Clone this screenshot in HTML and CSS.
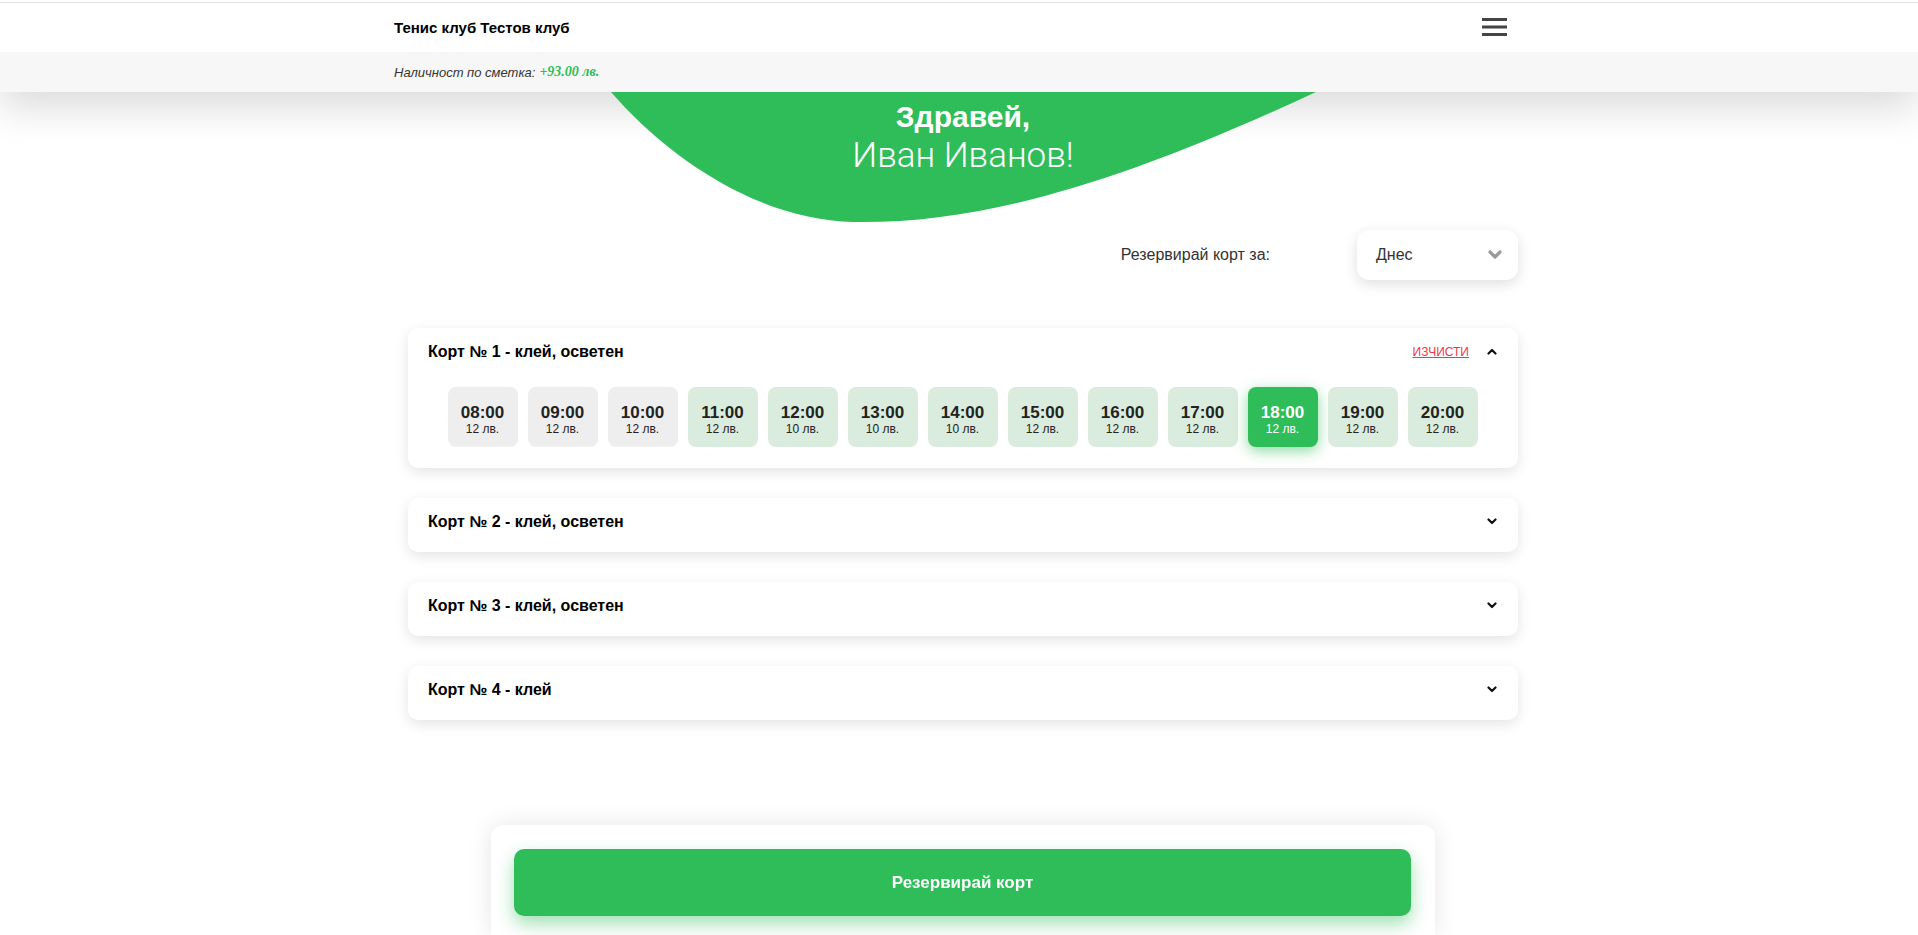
FILE: index.html
```html
<!DOCTYPE html>
<html lang="bg">
<head>
<meta charset="utf-8">
<title>Тенис клуб Тестов клуб</title>
<link rel="stylesheet" href="styles.css">
</head>
<body>
<header class="site-header">
  <div class="topbar">
    <div class="header-inner">
      <span class="club">Тенис клуб Тестов клуб</span>
      <button class="menu" aria-label="Меню">
        <svg width="25" height="19" viewBox="0 0 25 19"><rect x="0" y="0" width="25" height="3" fill="#444"/><rect x="0" y="7.5" width="25" height="3" fill="#444"/><rect x="0" y="15" width="25" height="3" fill="#444"/></svg>
      </button>
    </div>
  </div>
  <div class="balance-bar">
    <div class="header-inner">
      <span class="balance-label">Наличност по сметка:</span>
      <span class="balance-value">+93.00 лв.</span>
    </div>
  </div>
</header>

<main class="main">
  <section class="hero">
    <svg class="blob" width="720" height="135" viewBox="0 0 720 135"><path d="M8 0 C 60 60, 150 128, 251 130 C 380 132, 520 90, 713 0 Z" fill="#2ebd59"/></svg>
    <div class="greet-1">Здравей,</div>
    <div class="greet-2">Иван Иванов!</div>
  </section>

  <div class="container">
    <div class="date-row">
      <span class="date-label">Резервирай корт за:</span>
      <div class="select">
        <span>Днес</span>
        <svg width="14" height="10" viewBox="0 0 14 10"><polyline points="2,2 7,7 12,2" fill="none" stroke="#9a9a9a" stroke-width="3.2" stroke-linecap="round" stroke-linejoin="round"/></svg>
      </div>
    </div>

    <div class="courts">
      <div class="court">
        <div class="court-head">
          <span class="court-title">Корт № 1 - клей, осветен</span>
          <a class="clear" href="#">ИЗЧИСТИ</a>
          <svg class="chev" width="10" height="7" viewBox="0 0 10 7"><polyline points="1.5,5.5 5,2 8.5,5.5" fill="none" stroke="#111" stroke-width="2.2" stroke-linecap="round" stroke-linejoin="round"/></svg>
        </div>
        <div class="slots">
          <div class="slot past"><b>08:00</b><span>12 лв.</span></div>
          <div class="slot past"><b>09:00</b><span>12 лв.</span></div>
          <div class="slot past"><b>10:00</b><span>12 лв.</span></div>
          <div class="slot free"><b>11:00</b><span>12 лв.</span></div>
          <div class="slot free"><b>12:00</b><span>10 лв.</span></div>
          <div class="slot free"><b>13:00</b><span>10 лв.</span></div>
          <div class="slot free"><b>14:00</b><span>10 лв.</span></div>
          <div class="slot free"><b>15:00</b><span>12 лв.</span></div>
          <div class="slot free"><b>16:00</b><span>12 лв.</span></div>
          <div class="slot free"><b>17:00</b><span>12 лв.</span></div>
          <div class="slot selected"><b>18:00</b><span>12 лв.</span></div>
          <div class="slot free"><b>19:00</b><span>12 лв.</span></div>
          <div class="slot free"><b>20:00</b><span>12 лв.</span></div>
        </div>
      </div>

      <div class="court">
        <div class="court-head">
          <span class="court-title">Корт № 2 - клей, осветен</span>
          <svg class="chev" width="10" height="7" viewBox="0 0 10 7"><polyline points="1.5,1.5 5,5 8.5,1.5" fill="none" stroke="#111" stroke-width="2.2" stroke-linecap="round" stroke-linejoin="round"/></svg>
        </div>
      </div>

      <div class="court">
        <div class="court-head">
          <span class="court-title">Корт № 3 - клей, осветен</span>
          <svg class="chev" width="10" height="7" viewBox="0 0 10 7"><polyline points="1.5,1.5 5,5 8.5,1.5" fill="none" stroke="#111" stroke-width="2.2" stroke-linecap="round" stroke-linejoin="round"/></svg>
        </div>
      </div>

      <div class="court">
        <div class="court-head">
          <span class="court-title">Корт № 4 - клей</span>
          <svg class="chev" width="10" height="7" viewBox="0 0 10 7"><polyline points="1.5,1.5 5,5 8.5,1.5" fill="none" stroke="#111" stroke-width="2.2" stroke-linecap="round" stroke-linejoin="round"/></svg>
        </div>
      </div>
    </div>
  </div>
</main>

<div class="footer-bar">
  <div class="panel">
    <button class="reserve">Резервирай корт</button>
  </div>
</div>
</body>
</html>
```

FILE: styles.css
```css
* { box-sizing: border-box; }

html, body {
  margin: 0;
  padding: 0;
  background: #fff;
}

body {
  font-family: "Liberation Sans", Arial, sans-serif;
  color: #222;
}

/* Header */
.site-header {
  background: #fff;
  padding-top: 2px;
  box-shadow: 0 15px 40px rgba(0, 0, 0, 0.15);
}

.topbar {
  border-top: 1px solid #e2e2e2;
  height: 50px;
  padding-left: 8px;
  display: flex;
  align-items: center;
}

.header-inner {
  width: 1138px;
  margin: 0 auto;
  display: flex;
  align-items: center;
}

.club {
  flex: 1;
  font-size: 15px;
  font-weight: bold;
  color: #000;
}

.menu {
  border: 0;
  background: none;
  padding: 0;
  margin-right: 25px;
  width: 25px;
  height: 19px;
  display: block;
}

.menu svg { display: block; }

.balance-bar {
  background: #f7f7f7;
  height: 40px;
  padding-left: 8px;
  display: flex;
  align-items: center;
}

.balance-label {
  font-size: 13px;
  font-style: italic;
  color: #333;
}

.balance-value {
  margin-left: 4px;
  font-family: "Liberation Serif", "Times New Roman", serif;
  font-size: 14px;
  font-style: italic;
  font-weight: bold;
  color: #2ebd59;
}

/* Main */
.main {
  padding-left: 8px;
  padding-bottom: 40px;
}

.hero {
  position: relative;
  height: 138px;
  padding-top: 8px;
  text-align: center;
  color: #fff;
}

.blob {
  position: absolute;
  top: 0;
  left: 50%;
  margin-left: -360px;
  display: block;
}

.greet-1,
.greet-2 {
  position: relative;
}

.greet-1 {
  font-family: "Liberation Sans", Arial, sans-serif;
  font-size: 30px;
  font-weight: 700;
  line-height: 34px;
}

.greet-2 {
  font-family: Roboto, "Open Sans", sans-serif;
  font-size: 35px;
  font-weight: 300;
  line-height: 40px;
  margin-top: 2px;
}

.container {
  width: 1110px;
  margin: 0 auto;
}

.date-row {
  display: flex;
  justify-content: flex-end;
  align-items: center;
  height: 50px;
  margin-bottom: 48px;
}

.date-label {
  font-size: 16px;
  color: #333;
  margin-right: 87px;
}

.select {
  width: 161px;
  height: 50px;
  padding: 0 16px 0 19px;
  display: flex;
  align-items: center;
  justify-content: space-between;
  background: #fff;
  border-radius: 12px;
  box-shadow: 0 4px 14px rgba(0, 0, 0, 0.13);
  font-size: 16px;
  color: #333;
}

.select svg { display: block; }

/* Courts */
.court {
  background: #fff;
  border-radius: 10px;
  box-shadow: 0 4px 14px rgba(0, 0, 0, 0.11);
  padding: 0 21px 8px 20px;
}

.court + .court {
  margin-top: 30px;
}

.court-head {
  height: 46px;
  padding-top: 1px;
  display: flex;
  align-items: center;
}

.court-title {
  flex: 1;
  font-size: 16px;
  font-weight: bold;
  color: #000;
}

.clear {
  font-size: 12px;
  color: #e8394a;
  text-decoration: underline;
  margin-right: 18px;
}

.chev { display: block; }

.slots {
  display: flex;
  justify-content: center;
  gap: 10px;
  padding: 13px 0;
}

.slot {
  width: 70px;
  height: 60px;
  border-radius: 8px;
  display: flex;
  flex-direction: column;
  align-items: center;
  justify-content: center;
  padding-top: 4px;
  color: #222;
}

.slot b {
  font-size: 17px;
  line-height: 19px;
}

.slot span {
  font-size: 12px;
  line-height: 14px;
}

.slot.past { background: #eeeeee; }
.slot.free { background: #daecdd; }
.slot.selected {
  background: #2ebd59;
  color: #fff;
  box-shadow: 0 4px 14px rgba(46, 189, 89, 0.55);
}

/* Footer action panel */
.footer-bar {
  position: fixed;
  left: 8px;
  right: 0;
  bottom: 0;
  display: flex;
  justify-content: center;
}

.panel {
  width: 944px;
  height: 110px;
  padding: 24px 24px 0 23px;
  background: #fff;
  border-radius: 12px 12px 0 0;
  box-shadow: 0 0 24px rgba(0, 0, 0, 0.1);
}

.reserve {
  width: 100%;
  height: 67px;
  border: 0;
  border-radius: 10px;
  background: #2ebd59;
  color: #fff;
  font-family: "Liberation Sans", Arial, sans-serif;
  font-size: 17px;
  font-weight: bold;
  box-shadow: 0 8px 18px rgba(46, 189, 89, 0.45);
}
```
